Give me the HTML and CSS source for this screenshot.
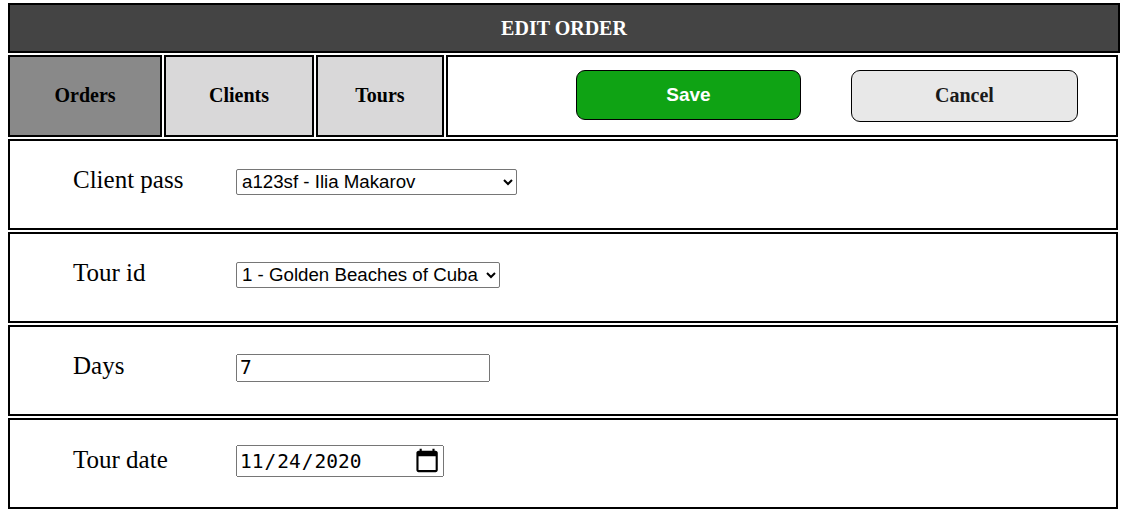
FILE: index.html
```html
<!DOCTYPE html>
<html lang="en-US">
<head>
<meta charset="utf-8">
<title>Edit order</title>
<link rel="stylesheet" href="styles.css">
</head>
<body>
<div class="page">
  <header class="title">EDIT ORDER</header>
  <nav class="tabs">
    <div class="tab tab-orders active">Orders</div>
    <div class="tab tab-clients">Clients</div>
    <div class="tab tab-tours">Tours</div>
    <div class="actions">
      <button type="button" class="btn btn-save">Save</button>
      <button type="button" class="btn btn-cancel">Cancel</button>
    </div>
  </nav>
  <form class="form">
    <div class="row">
      <label class="label" for="client">Client pass</label>
      <select id="client" class="control select select-client">
        <option>a123sf - Ilia Makarov</option>
      </select>
    </div>
    <div class="row">
      <label class="label" for="tour">Tour id</label>
      <select id="tour" class="control select select-tour">
        <option>1 - Golden Beaches of Cuba</option>
      </select>
    </div>
    <div class="row">
      <label class="label" for="days">Days</label>
      <input id="days" class="control input-text" type="text" value="7">
    </div>
    <div class="row">
      <label class="label" for="date">Tour date</label>
      <input id="date" class="control input-date" type="date" value="2020-11-24">
    </div>
  </form>
</div>
</body>
</html>
```
FILE: styles.css
```css
body {
  margin: 3px 0 0 8px;
  font-family: "Liberation Serif", "Times New Roman", serif;
  color: #000;
  background: #fff;
}

.page {
  width: 1112px;
  display: flex;
  flex-direction: column;
  gap: 2px;
}

.title {
  box-sizing: border-box;
  height: 50px;
  border: 2px solid #000;
  background: #444444;
  color: #fff;
  font-weight: bold;
  font-size: 20px;
  display: flex;
  align-items: center;
  justify-content: center;
}

.tabs {
  width: 1110px;
  height: 82px;
  display: flex;
  gap: 2px;
}

.tab {
  box-sizing: border-box;
  border: 2px solid #000;
  background: #d9d8d9;
  font-weight: bold;
  font-size: 20px;
  display: flex;
  align-items: center;
  justify-content: center;
  padding-bottom: 2px;
}

.tab-orders { width: 154px; }
.tab-clients { width: 150px; }
.tab-tours { width: 128px; }

.tab.active {
  background: #898989;
}

.actions {
  box-sizing: border-box;
  flex: 1;
  border: 2px solid #000;
  background: #fff;
  display: flex;
  align-items: flex-start;
  padding: 13px 0 0 128px;
  gap: 50px;
}

.btn {
  box-sizing: border-box;
  border: 1px solid #000;
  border-radius: 9px;
  cursor: pointer;
}

.btn-save {
  width: 225px;
  height: 50px;
  background: #0fa314;
  color: #fff;
  font-family: "Liberation Sans", Arial, sans-serif;
  font-weight: bold;
  font-size: 19px;
}

.btn-cancel {
  width: 227px;
  height: 52px;
  background: #e8e8e8;
  color: #1a1a1a;
  font-family: "Liberation Serif", "Times New Roman", serif;
  font-weight: bold;
  font-size: 20px;
  padding-bottom: 2px;
}

.form {
  display: flex;
  flex-direction: column;
  gap: 2px;
  margin: 0;
}

.row {
  box-sizing: border-box;
  width: 1110px;
  height: 91px;
  border: 2px solid #000;
  display: flex;
  align-items: baseline;
  padding: 25px 0 0 63px;
}

.label {
  width: 163px;
  font-size: 25px;
}

.control {
  margin: 0;
}

.select {
  box-sizing: border-box;
  height: 26px;
  padding-left: 1px;
  font-family: "Liberation Sans", Arial, sans-serif;
  font-size: 18.7px;
  color: #000;
  background: #fff;
  border: 1px solid #767676;
  border-radius: 2px;
}

.select-client { width: 281px; }
.select-tour { width: 264px; }

.input-text {
  box-sizing: border-box;
  width: 254px;
  height: 28px;
  font-family: "DejaVu Sans Mono", monospace;
  font-size: 19.5px;
}

.input-date {
  box-sizing: border-box;
  width: 208px;
  height: 32px;
  font-family: "DejaVu Sans Mono", monospace;
  font-size: 19.5px;
}

.input-date::-webkit-calendar-picker-indicator {
  transform: scale(1.35);
  margin-right: 4px;
}
```
